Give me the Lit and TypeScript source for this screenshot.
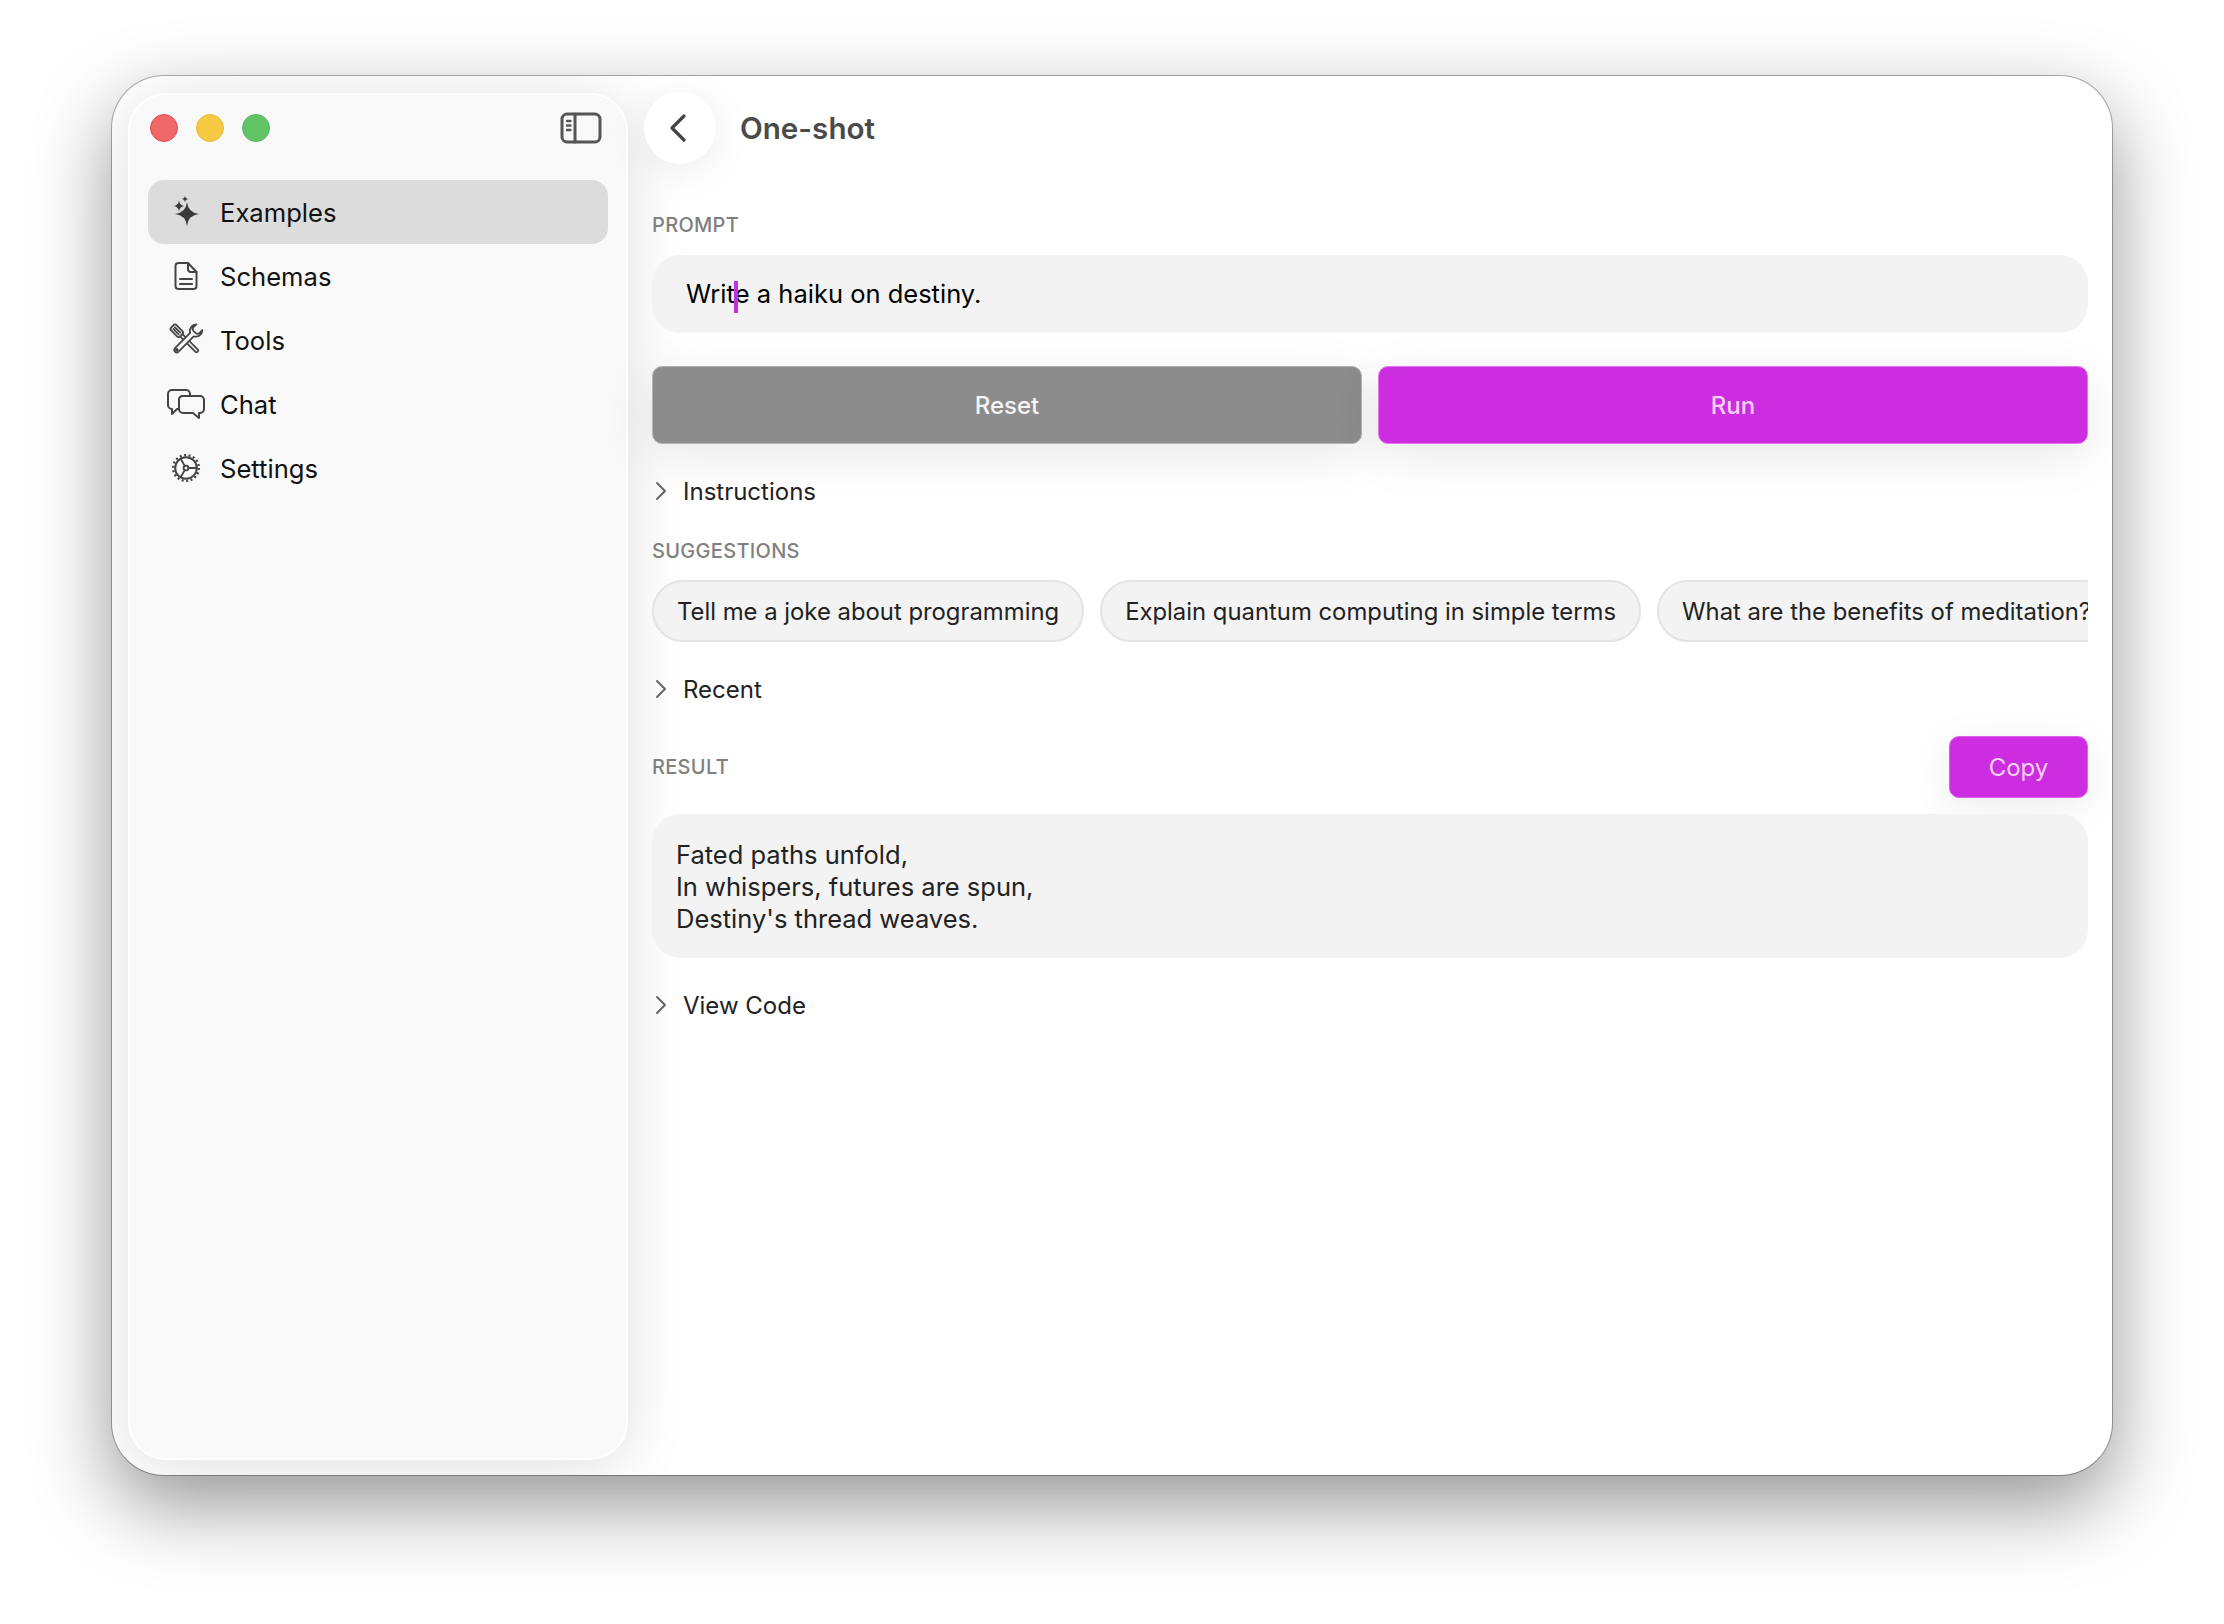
import { LitElement, html, css, svg } from "lit";
import { customElement } from "lit/decorators.js";

const chev = html`<svg class="chev" viewBox="0 0 12 20"><path d="M2 2 L10 10 L2 18" /></svg>`;

const icons: Record<string, unknown> = {
  Examples: svg`<g fill="#3a3a3a" stroke="none"><path d="M25 14 Q26.2 24.8 37 26 Q26.2 27.2 25 38 Q23.8 27.2 13 26 Q23.8 24.8 25 14Z"/><path d="M17 12.5 Q17.6 17.4 22.5 18 Q17.6 18.6 17 23.5 Q16.4 18.6 11.5 18 Q16.4 17.4 17 12.5Z"/><path d="M23 8 Q23.3 10.7 26 11 Q23.3 11.3 23 14 Q22.7 11.3 20 11 Q22.7 10.7 23 8Z"/></g>`,
  Schemas: svg`<path d="M16.5 11 H26 L34.5 20 V34 a3 3 0 0 1 -3 3 H16.5 a3 3 0 0 1 -3 -3 V14 a3 3 0 0 1 3 -3 Z"/><path d="M26 11 V17 a3 3 0 0 0 3 3 H34.5"/><path d="M18 27 H30 M18 32 H30"/>`,
  Tools: svg`<g transform="translate(24 24) scale(.84) translate(-24 -24)" stroke-width="2.1"><g transform="rotate(-45 24 24)"><rect x="19.5" y="1" width="9" height="15" rx="2.5"/><path d="M22.6 4 V13 M25.4 4 V13"/><path d="M22 16 V42 a1.5 1.5 0 0 0 1.5 1.5 h1 a1.5 1.5 0 0 0 1.5 -1.5 V16"/></g><g transform="rotate(45 24 24)"><path fill="#f9f9f9" d="M19.5 2 A8 8 0 0 0 21.5 14.5 V40 a3 3 0 0 0 6 0 V14.5 A8 8 0 0 0 29.5 2 V7 a3 3 0 0 1 -3 3 h-4 a3 3 0 0 1 -3 -3 Z"/><circle cx="24.5" cy="40" r="1"/></g></g>`,
  Chat: svg`<path d="M10 10 H24 a4 4 0 0 1 4 4 V16 H21 a4 4 0 0 0 -4 4 V29 H15 L10 34 V29 H10 a4 4 0 0 1 -4 -4 V14 a4 4 0 0 1 4 -4 Z"/><path fill="#f9f9f9" d="M21 16 H38 a4 4 0 0 1 4 4 V29 a4 4 0 0 1 -4 4 H37 V38 L31 33 H21 a4 4 0 0 1 -4 -4 V20 a4 4 0 0 1 4 -4 Z"/>`,
  Settings: svg`<circle cx="24" cy="24" r="10.8" stroke-width="2"/><circle cx="24" cy="24" r="12.9" stroke-width="2.4" stroke-linecap="butt" stroke-dasharray="2 2.5"/><circle cx="24" cy="24" r="2.4" stroke-width="1.8"/><path stroke-width="1.8" d="M26.4 24 H34.5 M22.8 21.9 L18.6 14.7 M22.8 26.1 L18.6 33.3"/>`,
};

@customElement("app-root")
export class AppRoot extends LitElement {
  static styles = css`
    :host {
      display: block;
      width: 2224px;
      height: 1624px;
      overflow: hidden;
      background: #fff;
      box-sizing: border-box;
      padding: 76px 112px 0;
      font-family: "Inter", "Liberation Sans", sans-serif;
      color: #111;
    }
    * { box-sizing: border-box; }
    .window {
      width: 2000px;
      height: 1399px;
      background: #fff;
      border-radius: 52px;
      box-shadow: 0 0 0 1px rgba(0,0,0,.3), 0 30px 80px rgba(0,0,0,.42);
      display: flex;
      padding: 16px 24px 15px 16px;
      overflow: hidden;
    }
    .sidebar {
      width: 500px;
      flex: none;
      background: #f9f9f9;
      border: 2px solid #fff;
      border-radius: 38px;
      box-shadow: 0 6px 60px rgba(0,0,0,.13);
      margin-top: 1px;
      padding: 0 18px;
      display: flex;
      flex-direction: column;
    }
    .titlebar {
      height: 66px;
      padding-left: 2px;
      display: flex;
      align-items: center;
      gap: 18px;
      flex: none;
    }
    .dot { width: 28px; height: 28px; border-radius: 50%; }
    .red { background: #f0686a; border: 1px solid #e5504f; }
    .yellow { background: #f5c941; border: 1px solid #e8bd3a; }
    .green { background: #62c466; border: 1px solid #55b85b; }
    .toggle { width: 42px; height: 32px; margin-left: auto; margin-right: 6px; fill: none; stroke: #555; stroke-width: 3; stroke-linecap: round; }
    .nav { display: flex; flex-direction: column; margin-top: 19px; }
    .item {
      height: 64px;
      border-radius: 16px;
      display: flex;
      align-items: center;
      padding-left: 14px;
      gap: 10px;
      font-size: 25.6px;
      color: #111;
    }
    .item.active { background: #dcdcdc; }
    .item svg { width: 48px; height: 48px; flex: none; fill: none; stroke: #444; stroke-width: 2; stroke-linejoin: round; stroke-linecap: round; }
    .main { flex: 1; min-width: 0; padding-left: 24px; display: flex; flex-direction: column; }
    .head { display: flex; align-items: center; gap: 24px; height: 72px; margin-left: -8px; flex: none; }
    .back {
      width: 72px; height: 72px; border-radius: 50%; background: #fff;
      box-shadow: 0 6px 40px rgba(0,0,0,.08);
      display: flex; align-items: center; justify-content: center; padding-right: 4px;
    }
    .back svg { width: 18px; height: 30px; fill: none; stroke: #444; stroke-width: 3.2; stroke-linecap: round; stroke-linejoin: round; }
    h1 { margin: 0; font-size: 29.6px; font-weight: 600; color: #4a4a4a; }
    .label { font-size: 20px; font-weight: 500; color: #808080; line-height: 24px; letter-spacing: .3px; }
    .prompt-label { margin-top: 49px; }
    .input {
      margin-top: 18px; height: 78px; border-radius: 28px; background: #f3f3f3;
      display: flex; align-items: center; padding: 3px 0 0 34px; font-size: 25.5px; color: #000;
    }
    .caret { display: inline-block; width: 4px; height: 32px; background: #c030e0; margin: 0 -3px 0 -1px; vertical-align: middle; position: relative; }
    .buttons { display: flex; gap: 16px; margin-top: 33px; }
    .btn {
      flex: 1; height: 78px; border-radius: 10px; display: flex; align-items: center; justify-content: center;
      font-size: 24px; font-weight: 500;
    }
    .reset { background: #8c8c8c; color: #f5f5f5; border: 1px solid #b4b4b4; box-shadow: 0 12px 50px rgba(0,0,0,.09); }
    .run { background: #cc2de0; color: #fad0ff; border: 1px solid #e475ee; box-shadow: 0 12px 50px rgba(0,0,0,.09); }
    .disc { display: flex; align-items: center; gap: 16px; height: 40px; font-size: 24px; color: #222; }
    .chev { width: 12px; height: 20px; margin-left: 3px; fill: none; stroke: #666; stroke-width: 2; stroke-linecap: round; stroke-linejoin: round; }
    .instr { margin-top: 27px; }
    .sugg-label { margin-top: 28px; }
    .pills { display: flex; gap: 16px; margin-top: 17px; overflow: hidden; }
    .pill {
      flex: none; height: 62px; border-radius: 31px; background: #f3f3f3; border: 2px solid #e3e3e3;
      display: flex; align-items: center; padding: 0 23px; font-size: 23.85px; color: #222; white-space: nowrap;
    }
    .recent { margin-top: 27px; }
    .result-head { display: flex; align-items: center; justify-content: space-between; margin-top: 27px; }
    .copy {
      width: 139px; height: 62px; border-radius: 10px; background: #cc2de0; color: #fad0ff; font-size: 24px;
      display: flex; align-items: center; justify-content: center; border: 1px solid #e060ea;
      box-shadow: 0 8px 40px rgba(0,0,0,.08);
    }
    .result {
      margin-top: 16px; height: 144px; border-radius: 28px; background: #f3f3f3; padding: 25px 24px 0;
      font-size: 25.5px; line-height: 32px; color: #222;
    }
    .viewcode { margin-top: 27px; }
  `;

  render() {
    const nav = ["Examples", "Schemas", "Tools", "Chat", "Settings"];
    return html`
      <div class="window">
        <aside class="sidebar">
          <div class="titlebar">
            <div class="dot red"></div><div class="dot yellow"></div><div class="dot green"></div>
            <svg class="toggle" viewBox="0 0 42 32">
              <rect x="2" y="2" width="38" height="28" rx="5" /><path d="M15 2 V30" />
              <path stroke-width="2.4" d="M7 9 H10.5 M7 13.5 H10.5 M7 18 H10.5" />
            </svg>
          </div>
          <nav class="nav">
            ${nav.map((n, i) => html`<div class="item ${i === 0 ? "active" : ""}"><svg viewBox="0 0 48 48">${icons[n]}</svg><span>${n}</span></div>`)}
          </nav>
        </aside>
        <main class="main">
          <div class="head">
            <div class="back"><svg viewBox="0 0 18 30"><path d="M15 3 L3 15 L15 27" /></svg></div>
            <h1>One-shot</h1>
          </div>
          <div class="label prompt-label">PROMPT</div>
          <div class="input"><span>Writ<span class="caret"></span>e a haiku on destiny.</span></div>
          <div class="buttons"><div class="btn reset">Reset</div><div class="btn run">Run</div></div>
          <div class="disc instr">${chev}<span>Instructions</span></div>
          <div class="label sugg-label">SUGGESTIONS</div>
          <div class="pills">
            <div class="pill">Tell me a joke about programming</div>
            <div class="pill">Explain quantum computing in simple terms</div>
            <div class="pill">What are the benefits of meditation?</div>
          </div>
          <div class="disc recent">${chev}<span>Recent</span></div>
          <div class="result-head"><div class="label">RESULT</div><div class="copy">Copy</div></div>
          <div class="result">Fated paths unfold,<br />In whispers, futures are spun,<br />Destiny's thread weaves.</div>
          <div class="disc viewcode">${chev}<span>View Code</span></div>
        </main>
      </div>
    `;
  }
}
